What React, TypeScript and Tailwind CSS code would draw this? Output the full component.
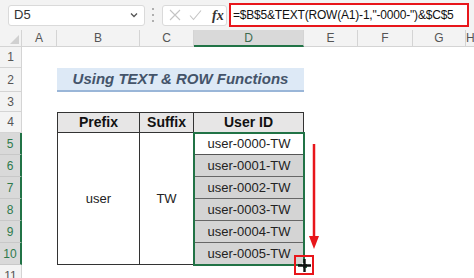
import React from "react"

const font = { fontFamily: '"Liberation Sans", Arial, sans-serif' }

const cols = ["A", "B", "C", "D", "E", "F", "G", "H"]
const rowStarts = ["row-start-2", "row-start-3", "row-start-4", "row-start-5", "row-start-6", "row-start-7", "row-start-8", "row-start-9", "row-start-10", "row-start-11", "row-start-12"]
const ids = ["user-0000-TW", "user-0001-TW", "user-0002-TW", "user-0003-TW", "user-0004-TW", "user-0005-TW"]

function FormulaBar() {
  return (
    <div className="flex h-[30px] items-center bg-[#f3f3f3]">
      <div className="ml-[8px] flex h-[21px] w-[137px] items-center justify-between rounded-[3px] border border-[#dadada] bg-white pl-[5px] pr-[5px]">
        <span className="text-[13px] text-[#333]">D5</span>
        <svg width="10" height="10" viewBox="0 0 10 10" fill="none" stroke="#555" strokeWidth="1.3">
          <path d="M2 3.5 L5 6.5 L8 3.5" />
        </svg>
      </div>
      <div className="ml-[6px] flex h-[14px] w-[4px] flex-col items-center justify-between">
        <span className="size-[2px] rounded-full bg-[#999]" />
        <span className="size-[2px] rounded-full bg-[#999]" />
        <span className="size-[2px] rounded-full bg-[#999]" />
      </div>
      <div className="ml-[7px] flex h-[21px] w-[65px] items-center gap-[8px] rounded-[3px] border border-[#dadada] bg-white pl-[6px]">
        <svg width="12" height="12" viewBox="0 0 12 12" stroke="#c4c4c4" strokeWidth="1.1">
          <path d="M1 1 L11 11 M11 1 L1 11" />
        </svg>
        <svg width="13" height="12" viewBox="0 0 13 12" fill="none" stroke="#c4c4c4" strokeWidth="1.1">
          <path d="M1 6.5 L4.5 10.5 L12 1.5" />
        </svg>
        <span className="ml-[2px] text-[14px] font-bold italic text-[#333]" style={{ fontFamily: '"Liberation Serif", serif' }}>
          fx
        </span>
      </div>
      <div className="ml-[2px] flex h-[24px] w-[240px] items-center overflow-hidden whitespace-nowrap border-2 border-[#e8161b] bg-white pl-[2px] text-[12px] tracking-[-0.2px] text-[#111]">
        =$B$5&amp;TEXT(ROW(A1)-1,"-0000-")&amp;$C$5
      </div>
    </div>
  )
}

export default function App() {
  return (
    <div className="relative h-[278px] w-[474px] overflow-hidden bg-white" style={font}>
      <FormulaBar />
      <div className="grid grid-cols-[22px_35px_83px_54px_110px_54px_55px_53px_1fr] grid-rows-[17px_21px_24px_20px_21px_repeat(6,22px)_22px]">
        {/* column headers */}
        <div className="relative border-b border-r border-[#d4d4d4] bg-[#f3f3f3]">
          <svg className="absolute bottom-[2px] right-[2px]" width="9" height="9" viewBox="0 0 9 9">
            <path d="M9 0 L9 9 L0 9 Z" fill="#d0d0d0" />
          </svg>
        </div>
        {cols.map((c) => (
          <div
            key={c}
            className={
              c === "D"
                ? "flex items-center justify-center border-b-2 border-r border-b-[#217346] border-r-[#d4d4d4] bg-[#d9d9d9] text-[12px] text-[#3c6b4f]"
                : "flex items-center justify-center border-b border-r border-[#d4d4d4] bg-[#f3f3f3] text-[12px] text-[#555]"
            }
          >
            {c}
          </div>
        ))}

        {/* row headers */}
        {rowStarts.map((rs, i) => {
          const sel = i >= 4 && i <= 9
          return (
            <div
              key={rs}
              className={
                sel
                  ? `${rs} col-start-1 flex items-center justify-center border-b border-r-2 border-b-[#c8c8c8] border-r-[#217346] bg-[#d9d9d9] text-[12px] text-[#2e7a4c]`
                  : `${rs} col-start-1 flex items-center justify-center border-b border-r border-[#d4d4d4] bg-[#f3f3f3] text-[12px] text-[#555]`
              }
            >
              {i + 1}
            </div>
          )
        })}

        {/* title band B2:D2 */}
        <div className="col-start-3 col-span-3 row-start-3 flex items-center justify-center border-b-2 border-[#9ab6d8] bg-[#dde9f6] text-[15px] font-bold italic text-[#44546a]">
          Using TEXT &amp; ROW Functions
        </div>

        {/* table B4:D10 */}
        <div className="col-start-3 col-span-3 row-start-5 row-span-7 grid grid-cols-[83px_54px_110px] grid-rows-[21px_repeat(6,22px)]">
          <div className="flex items-center justify-center border border-[#333] bg-[#e7e6e6] text-[14px] font-bold text-[#111]">Prefix</div>
          <div className="flex items-center justify-center border-y border-r border-[#333] bg-[#e7e6e6] text-[14px] font-bold text-[#111]">Suffix</div>
          <div className="flex items-center justify-center border-y border-r border-[#333] bg-[#e7e6e6] text-[14px] font-bold text-[#111]">User ID</div>
          <div className="row-span-6 flex items-center justify-center border-x border-b border-[#333] text-[13px] text-[#222]">user</div>
          <div className="row-span-6 flex items-center justify-center border-b border-r border-[#333] text-[13px] text-[#222]">TW</div>
          <div className="relative row-span-6 flex flex-col">
            {ids.map((id, i) => (
              <div
                key={id}
                className={
                  i === 0
                    ? "flex h-[22px] items-center justify-center border-b border-[#555] bg-white text-[13px] text-[#222]"
                    : "flex h-[22px] items-center justify-center border-b border-[#666] bg-[#d4d4d4] text-[13px] text-[#222]"
                }
              >
                {id}
              </div>
            ))}
            <div className="pointer-events-none absolute inset-[-1px] border-2 border-[#217346]" />
            <div className="absolute bottom-[-4px] right-[-4px] size-[6px] border border-white bg-[#217346]" />
          </div>
        </div>
      </div>

      {/* red drag arrow */}
      <svg className="absolute left-[308px] top-[144px]" width="12" height="106" viewBox="0 0 12 106">
        <path d="M6 0 L6 96" stroke="#e8161b" strokeWidth="2.5" />
        <path d="M1 92 L6 105 L11 92 Z" fill="#e8161b" />
      </svg>
      <div className="absolute left-[294px] top-[255px] flex h-[20px] w-[20px] items-center justify-center border-2 border-[#e8161b]">
        <svg width="13" height="13" viewBox="0 0 13 13">
          <path d="M6.5 0 L6.5 13 M0 6.5 L13 6.5" stroke="#111" strokeWidth="2.4" />
        </svg>
      </div>
    </div>
  )
}
